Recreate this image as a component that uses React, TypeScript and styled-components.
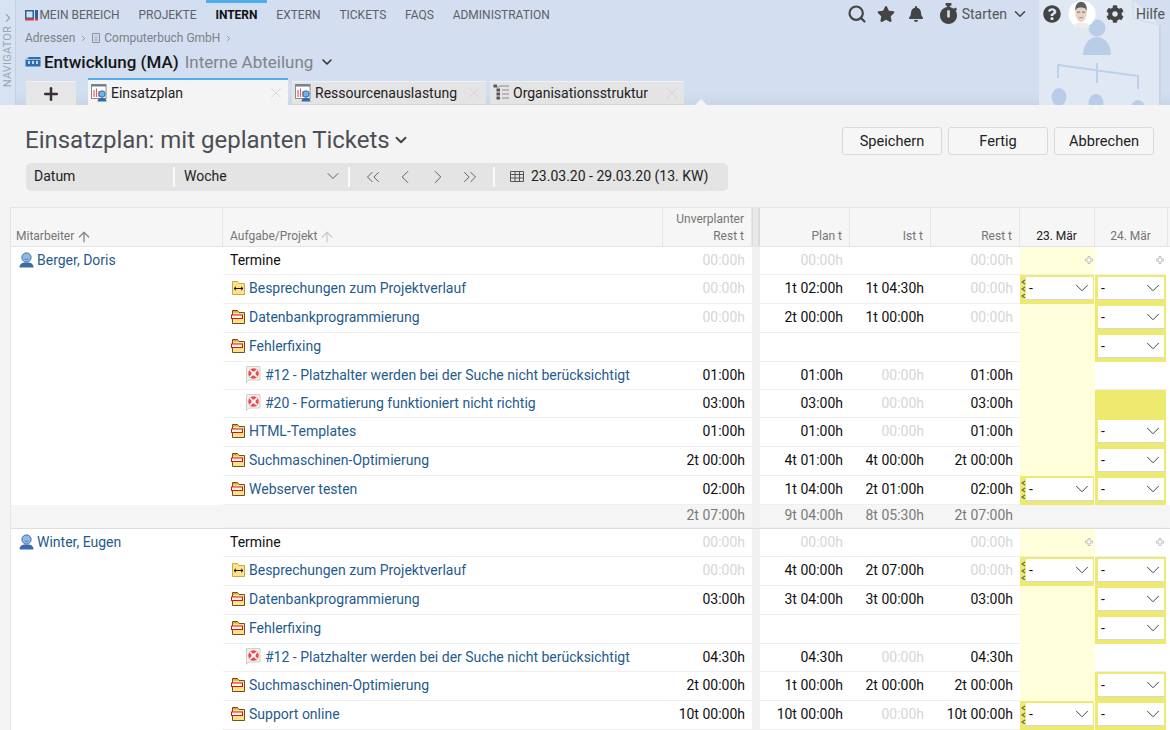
import React from 'react';
import styled, { createGlobalStyle } from 'styled-components';
import { ArrowUp, ChevronDown, ChevronLeft, ChevronRight, ChevronsLeft, ChevronsRight, Plus, Search, X } from 'lucide-react';
import { FaBell, FaCog, FaQuestionCircle, FaStar, FaStopwatch } from 'react-icons/fa';

const GlobalStyle = createGlobalStyle`
  html, body {
    margin: 0;
    height: 730px;
    overflow: hidden;
    background: #f4f4f4;
    font-family: Roboto, "Liberation Sans", sans-serif;
    font-size: 14px;
    color: #111;
  }
  * { box-sizing: border-box; }
`;

const Page = styled.div`
  width: 1170px;
  height: 730px;
  overflow: hidden;
`;

/* ---------- blue header ---------- */

const Header = styled.header`
  position: relative;
  display: flex;
  height: 105px;
  background: linear-gradient(#d3dff0 0, #d3dff0 92px, #c9d6e8 105px);
`;

const Navigator = styled.div`
  position: relative;
  display: flex;
  flex-direction: column;
  align-items: center;
  width: 16px;
  padding-top: 11px;
  background: #d7e2f2;
  border-right: 1px solid #c3d0e3;
  color: #9aa5b5;
`;

const NavigatorLabel = styled.span`
  writing-mode: vertical-rl;
  transform: rotate(180deg);
  font-size: 11px;
  letter-spacing: 0.2px;
  margin-top: 1px;
`;

const HeaderMain = styled.div`
  position: relative;
  flex: 1;
  display: flex;
  flex-direction: column;
  min-width: 0;
`;

const TopBar = styled.div`
  display: flex;
  align-items: flex-start;
  height: 28px;
`;

const MainNav = styled.nav`
  display: flex;
  flex: 1;
`;

const NavItem = styled.a<{ $active?: boolean }>`
  display: flex;
  align-items: center;
  gap: 1px;
  height: 27px;
  padding: 0 9.4px;
  border-top: 3px solid ${(p) => (p.$active ? '#4eaef0' : 'transparent')};
  color: ${(p) => (p.$active ? '#111' : '#5d6069')};
  font-size: 12px;
  font-weight: ${(p) => (p.$active ? 700 : 400)};
  white-space: nowrap;
`;

const Tools = styled.div`
  display: flex;
  align-items: center;
  height: 27px;
  color: #444;
`;

const ToolButton = styled.span<{ $gap?: number }>`
  display: flex;
  align-items: center;
  margin-right: ${(p) => p.$gap ?? 0}px;
`;

const StartLabel = styled.span`
  font-size: 14px;
  color: #555;
  margin: 0 4px 0 3px;
`;

const HelpLabel = styled.span`
  font-size: 14px;
  color: #555;
  margin-right: 5px;
`;

const Crumbs = styled.div`
  display: flex;
  align-items: center;
  gap: 4px;
  height: 20px;
  padding-left: 9px;
  font-size: 12px;
  color: #7c8087;
`;

const TitleRow = styled.div`
  display: flex;
  align-items: center;
  height: 27px;
  padding-left: 9px;
`;

const Entity = styled.span`
  margin-left: 3px;
  font-size: 17px;
  font-weight: 500;
  color: #151515;
`;

const EntityType = styled.span`
  margin: 0 6px;
  font-size: 17px;
  color: #7f838a;
`;

const TabStrip = styled.div`
  display: flex;
  align-items: flex-end;
  height: 27px;
  margin-top: 3px;
  padding-left: 10px;
`;

const AddTab = styled.div`
  display: flex;
  align-items: center;
  justify-content: center;
  width: 50px;
  height: 24px;
  margin-right: 12px;
  background: #e6e6e6;
  border-top: 1px solid #eef1f5;
  color: #333;
`;

const Tab = styled.div<{ $active?: boolean; $width: number }>`
  display: flex;
  align-items: center;
  width: ${(p) => p.$width}px;
  height: ${(p) => (p.$active ? 27 : 24)}px;
  margin-right: 4px;
  padding-left: 3px;
  background: ${(p) => (p.$active ? '#f4f4f4' : '#e4e4e4')};
  border-top: ${(p) => (p.$active ? '2px solid #4eaef0' : '1px solid #eef1f5')};
  border-bottom: ${(p) => (p.$active ? 'none' : '1px solid #d5d5d5')};
  font-size: 14px;
  color: #222;
`;

const TabLabel = styled.span`
  flex: 1;
  margin-left: 3px;
  white-space: nowrap;
`;

const TabClose = styled.span`
  display: flex;
  margin-right: 3px;
  color: #d2d2d2;
`;

const Watermark = styled.svg`
  position: absolute;
  right: 0;
  top: 0;
`;

const Notch = styled.div`
  position: absolute;
  left: 695px;
  bottom: 0;
  border-left: 6px solid transparent;
  border-right: 6px solid transparent;
  border-bottom: 6px solid #f4f4f4;
`;

/* ---------- page head ---------- */

const Content = styled.main`
  padding-top: 22px;
`;

const PageHead = styled.div`
  display: flex;
  justify-content: space-between;
  align-items: flex-start;
  height: 36px;
  padding: 0 16px 0 25px;
`;

const PageTitle = styled.h1`
  display: flex;
  align-items: center;
  gap: 2px;
  margin: 0;
  font-size: 24px;
  font-weight: 400;
  line-height: 26px;
  color: #4c4f55;
`;

const Actions = styled.div`
  display: flex;
  gap: 6px;
`;

const ActionButton = styled.button`
  width: 100px;
  height: 28px;
  padding: 0;
  background: #f6f6f6;
  border: 1px solid #d9d9d9;
  border-radius: 3px;
  font-family: inherit;
  font-size: 14.6px;
  color: #222;
`;

const FilterBar = styled.div`
  display: flex;
  align-items: center;
  width: 702px;
  height: 28px;
  margin-left: 26px;
  background: #e4e4e4;
  border-radius: 5px;
`;

const FilterPart = styled.div<{ $width: number; $inset?: number }>`
  display: flex;
  align-items: center;
  justify-content: space-between;
  width: ${(p) => p.$width}px;
  height: 20px;
  padding: 0 5px 2px ${(p) => p.$inset ?? 8}px;
  border-right: 2px solid #fbfbfb;
  font-size: 14px;
  color: #222;
`;

const Pager = styled.div`
  display: flex;
  align-items: center;
  justify-content: space-between;
  width: 145px;
  height: 20px;
  padding: 0 12px 0 12px;
  border-right: 2px solid #fbfbfb;
  color: #555;
`;

const DateRange = styled.div`
  display: flex;
  align-items: center;
  gap: 7px;
  padding: 0 0 2px 15px;
  font-size: 14px;
  color: #222;
`;

/* ---------- table ---------- */

const COLUMNS = '212px 440px 89px 8px 90px 81px 89px 75px 73px 1fr';

const Table = styled.div`
  margin: 16px 0 0 10px;
  border-top: 1px solid #e6e6e6;
  border-left: 1px solid #e6e6e6;
`;

const HeadRow = styled.div`
  display: grid;
  grid-template-columns: ${COLUMNS};
  height: 39px;
  background: #f6f6f6;
  border-bottom: 1px solid #e4e4e4;
`;

const HeadCell = styled.div<{ $right?: boolean; $center?: boolean; $dark?: boolean; $line?: boolean; $inset?: number }>`
  display: flex;
  flex-direction: column;
  justify-content: flex-end;
  align-items: ${(p) => (p.$right ? 'flex-end' : p.$center ? 'center' : 'flex-start')};
  padding: ${(p) => (p.$right ? '0 7px 1px 0' : p.$center ? '0 1px 1px 0' : `0 0 1px ${p.$inset ?? 5}px`)};
  border-right: ${(p) => (p.$line === false ? 'none' : '1px solid #e6e6e6')};
  font-size: 12px;
  line-height: 17px;
  color: ${(p) => (p.$dark ? '#222' : '#757575')};
`;

const SortLabel = styled.span`
  display: flex;
  align-items: center;
  gap: 2px;
`;

const HeadGap = styled.div`
  background: #e9e9e9;
  border-left: 1px solid #dcdcdc;
  border-right: 2px solid #dcdcdc;
`;

const BodyRow = styled.div<{ $height: number; $sum?: boolean }>`
  display: grid;
  grid-template-columns: ${COLUMNS};
  height: ${(p) => p.$height}px;
  background: ${(p) => (p.$sum ? '#f5f5f5' : '#fff')};
  ${(p) => (p.$sum ? 'border-bottom: 1px solid #dedede;' : '')}
`;

const PersonCell = styled.div`
  display: flex;
  align-items: center;
  gap: 3px;
  padding: 0 0 2px 8px;
  color: #1f5b8e;
  font-size: 14px;
`;

const TaskCell = styled.div<{ $indent?: boolean; $plain?: boolean }>`
  display: flex;
  align-items: center;
  gap: ${(p) => (p.$indent ? 4 : 3)}px;
  padding: 0 0 2px ${(p) => (p.$indent ? 23 : p.$plain ? 7 : 8)}px;
  border-bottom: 1px solid #efefef;
  color: ${(p) => (p.$plain ? '#111' : '#1f5b8e')};
  font-size: 14px;
  white-space: nowrap;
`;

const TimeCell = styled.div<{ $muted?: boolean; $sum?: boolean }>`
  display: flex;
  align-items: center;
  justify-content: flex-end;
  padding: 0 7px 2px 0;
  border-bottom: 1px solid #efefef;
  color: ${(p) => (p.$muted ? '#d6d6d6' : p.$sum ? '#7a7a7a' : '#111')};
  font-size: 14px;
  white-space: nowrap;
`;

const RowGap = styled.div`
  background: #f1f1f1;
`;

type DayKind = 'none' | 'plus' | 'empty' | 'select' | 'handle' | 'full';

const DayCell = styled.div<{ $kind: DayKind; $today?: boolean }>`
  position: relative;
  display: flex;
  align-items: stretch;
  padding: ${(p) => (p.$kind === 'handle' ? '2px 1px 3px 6px' : p.$kind === 'select' ? '2px 2px 3px 3px' : '0')};
  margin-right: ${(p) => (p.$today ? (p.$kind === 'handle' ? 1 : 0) : 2)}px;
  background: ${(p) =>
    p.$kind === 'select' || p.$kind === 'handle' || p.$kind === 'full'
      ? '#eeea70'
      : p.$today && p.$kind !== 'none'
        ? '#ffffdc'
        : 'transparent'};
  border-bottom: 1px solid ${(p) => (p.$kind === 'none' || p.$kind === 'plus' ? '#efefef' : 'transparent')};
`;

const DaySelect = styled.div`
  flex: 1;
  display: flex;
  align-items: center;
  justify-content: space-between;
  padding: 0 0 0 3px;
  background: #fff;
  border-bottom: 1px solid #d8d8d8;
  font-size: 14px;
  color: #111;
`;

const PlusMark = styled.svg`
  position: absolute;
  top: 9px;
  right: 2px;
`;

const HandleMark = styled.svg`
  position: absolute;
  top: 4px;
  left: 1px;
`;

/* ---------- drawn icons ---------- */

const PersonIcon = () => (
  <svg width="15" height="16" viewBox="0 0 15 16">
    <circle cx="7.5" cy="5.5" r="4.6" fill="#8dbbe6" stroke="#3a6ba8" />
    <path d="M5.500 6.800c1 1 3 1 4 0" fill="none" stroke="#3a6ba8" strokeWidth="0.800" />
    <path d="M0.5 15.500c0-3.400 2.600-4.800 4.500-5h5c1.900.2 4.500 1.600 4.500 5z" fill="#3a6ba8" />
  </svg>
);

const FolderBar = () => (
  <svg width="15" height="16" viewBox="0 0 15 16">
    <path d="M1.500 1.500h5l1.500 2h5.500v11h-12z" fill="#ffe08a" stroke="#6b5220" />
    <path d="M2 2h4.300l1 1.500h-5.300z" fill="#f09a2e" />
    <rect x="0.500" y="6" width="11" height="3.500" fill="#fff" stroke="#e01010" />
  </svg>
);

const FolderMeeting = () => (
  <svg width="15" height="16" viewBox="0 0 15 16">
    <path d="M1.500 1.500h5l1.500 2h5.500v11h-12z" fill="#ffe288" stroke="#c9a94a" />
    <path d="M3 8.500h9M3 8.500l2-1.700M3 8.500l2 1.700M12 8.500l-2-1.700M12 8.500l-2 1.700" stroke="#111" fill="none" />
  </svg>
);

const TicketIcon = () => (
  <svg width="15" height="17" viewBox="0 0 15 17">
    <path d="M0.500 0.500h13.500v13.500h-11l-2.500 2.500z" fill="#eef0ec" stroke="#d0d0d0" />
    <circle cx="7.500" cy="7.500" r="5.200" fill="#f04848" />
    <circle cx="7.500" cy="7.500" r="2" fill="#fff" />
    <path d="M4 4l7 7M11 4l-7 7" stroke="#fff" strokeWidth="1.600" />
  </svg>
);

const ChartPersonIcon = () => (
  <svg width="17" height="18" viewBox="0 0 17 18">
    <rect x="0.500" y="0.500" width="14.500" height="14" fill="#fff" stroke="#8a8a8a" />
    <rect x="0.500" y="0.500" width="14.500" height="2" fill="#6d7f92" />
    <path d="M3 13V6M5.500 13V4.500M8 13V7" stroke="#e26060" strokeWidth="1.200" />
    <circle cx="11" cy="10" r="3.200" fill="#6fb2ea" stroke="#2c6cb0" />
    <path d="M6.500 17.500c0-2.400 1.700-3.800 4.500-3.800s4.500 1.400 4.500 3.800z" fill="#2c6cb0" />
  </svg>
);

const OrgIcon = () => (
  <svg width="17" height="18" viewBox="0 0 17 18">
    <rect x="0.500" y="0.500" width="3.500" height="3" fill="#555" />
    <rect x="3.500" y="4.500" width="3.500" height="3" fill="#555" />
    <rect x="3.500" y="8.500" width="3.500" height="3" fill="#555" />
    <rect x="3.500" y="12.500" width="3.500" height="3" fill="#555" />
    <path d="M6 2h10M9 6h7M9 10h7M9 14h7M5 2v2" stroke="#888" />
  </svg>
);

const AreaIcon = () => (
  <svg width="13" height="11" viewBox="0 0 13 11">
    <rect x="0" y="0" width="9" height="10" fill="#2f5f96" />
    <rect x="1.500" y="1.500" width="6" height="6" fill="#cfe0f2" />
    <rect x="10" y="0" width="3" height="10" fill="#2f5f96" />
    <rect x="0" y="8.500" width="9" height="2" fill="#d9402e" />
    <rect x="10" y="8.500" width="3" height="2" fill="#d9402e" />
  </svg>
);

const DepartmentIcon = () => (
  <svg width="16" height="11" viewBox="0 0 16 11">
    <path d="M3 1h12.500v9.500h-15v-7z" fill="#2f6fae" />
    <path d="M3 1v2.500h-2.500zM3 3.500h12.500" stroke="#8fc0ee" fill="#8fc0ee" />
    <rect x="3" y="5" width="2" height="3" fill="#bcd8f3" />
    <rect x="7" y="5" width="2" height="3" fill="#bcd8f3" />
    <rect x="11" y="5" width="2" height="3" fill="#bcd8f3" />
  </svg>
);

const CompanyIcon = () => (
  <svg width="8" height="10" viewBox="0 0 8 10">
    <path d="M.5.500h7v9h-7zM2.500 3h1M4.500 3h1M2.500 5h1M4.500 5h1M2.500 7h3" fill="none" stroke="#8b8f96" />
  </svg>
);

const GridIcon = () => (
  <svg width="14" height="11" viewBox="0 0 14 11">
    <path d="M.5.500h13v10H.5zM.5 3.500h13M.5 7h13M5 .5v10M9.500.5v10" fill="none" stroke="#555" />
  </svg>
);

const Avatar = () => (
  <svg width="28" height="28" viewBox="0 0 30 30">
    <circle cx="15" cy="15" r="14.500" fill="#fff" />
    <path d="M6 30c0-4 3-6 8-6s9 2 9 6z" fill="#ececec" />
    <ellipse cx="14" cy="14" rx="6" ry="9.500" fill="#e6d3c6" />
    <path d="M8 12c-1-7 3-10 6-10s7 3 6 10c-1-3-2-4-6-4s-5 1-6 4z" fill="#5c5f60" />
    <path d="M9.500 13h3.500M15 13h3.500" stroke="#667" />
    <path d="M12 19h4" stroke="#a77" />
  </svg>
);

const HeaderWatermark = () => (
  <Watermark width="170" height="105" viewBox="0 0 170 105">
    <path d="M39 0v105h121V25L133 0z" fill="#e0e8f4" />
    <path d="M160 25v80" stroke="#c4d4ea" strokeWidth="2" />
    <path d="M133 0v18l27 7" fill="none" stroke="#d6e1f0" strokeWidth="2" />
    <circle cx="97" cy="28" r="8.500" fill="#b9cde8" />
    <path d="M83 55c0-10 6-18 14-18s14 8 14 18z" fill="#b9cde8" />
    <path d="M58 78V65l80 11v13M97 63v20" fill="none" stroke="#bdd0ea" strokeWidth="2" />
    <ellipse cx="59" cy="97" rx="7.500" ry="9" fill="#b9cde8" />
    <ellipse cx="96" cy="103" rx="7.500" ry="9" fill="#b9cde8" />
    <ellipse cx="138" cy="109" rx="7.500" ry="9" fill="#b9cde8" />
  </Watermark>
);

/* ---------- data ---------- */

type RowKind = 'termin' | 'meeting' | 'task' | 'ticket' | 'sum';

interface PlanRow {
  kind: RowKind;
  person?: string;
  label?: string;
  times: [string, string, string, string];
  day1: DayKind;
  day2: DayKind;
}

const Z = '00:00h';
const HEIGHTS: Record<RowKind, number> = { termin: 28, meeting: 29, task: 29, ticket: 28, sum: 24 };

const rows: PlanRow[] = [
  { kind: 'termin', person: 'Berger, Doris', label: 'Termine', times: [Z, Z, '', Z], day1: 'plus', day2: 'plus' },
  { kind: 'meeting', label: 'Besprechungen zum Projektverlauf', times: [Z, '1t 02:00h', '1t 04:30h', Z], day1: 'handle', day2: 'select' },
  { kind: 'task', label: 'Datenbankprogrammierung', times: [Z, '2t 00:00h', '1t 00:00h', Z], day1: 'empty', day2: 'select' },
  { kind: 'task', label: 'Fehlerfixing', times: ['', '', '', ''], day1: 'empty', day2: 'select' },
  { kind: 'ticket', label: '#12 - Platzhalter werden bei der Suche nicht berücksichtigt', times: ['01:00h', '01:00h', Z, '01:00h'], day1: 'empty', day2: 'none' },
  { kind: 'ticket', label: '#20 - Formatierung funktioniert nicht richtig', times: ['03:00h', '03:00h', Z, '03:00h'], day1: 'empty', day2: 'full' },
  { kind: 'task', label: 'HTML-Templates', times: ['01:00h', '01:00h', Z, '01:00h'], day1: 'empty', day2: 'select' },
  { kind: 'task', label: 'Suchmaschinen-Optimierung', times: ['2t 00:00h', '4t 01:00h', '4t 00:00h', '2t 00:00h'], day1: 'empty', day2: 'select' },
  { kind: 'task', label: 'Webserver testen', times: ['02:00h', '1t 04:00h', '2t 01:00h', '02:00h'], day1: 'handle', day2: 'select' },
  { kind: 'sum', times: ['2t 07:00h', '9t 04:00h', '8t 05:30h', '2t 07:00h'], day1: 'none', day2: 'none' },
  { kind: 'termin', person: 'Winter, Eugen', label: 'Termine', times: [Z, Z, '', Z], day1: 'plus', day2: 'plus' },
  { kind: 'meeting', label: 'Besprechungen zum Projektverlauf', times: [Z, '4t 00:00h', '2t 07:00h', Z], day1: 'handle', day2: 'select' },
  { kind: 'task', label: 'Datenbankprogrammierung', times: ['03:00h', '3t 04:00h', '3t 00:00h', '03:00h'], day1: 'empty', day2: 'select' },
  { kind: 'task', label: 'Fehlerfixing', times: ['', '', '', ''], day1: 'empty', day2: 'select' },
  { kind: 'ticket', label: '#12 - Platzhalter werden bei der Suche nicht berücksichtigt', times: ['04:30h', '04:30h', Z, '04:30h'], day1: 'empty', day2: 'none' },
  { kind: 'task', label: 'Suchmaschinen-Optimierung', times: ['2t 00:00h', '1t 00:00h', '2t 00:00h', '2t 00:00h'], day1: 'empty', day2: 'select' },
  { kind: 'task', label: 'Support online', times: ['10t 00:00h', '10t 00:00h', Z, '10t 00:00h'], day1: 'handle', day2: 'select' },
];

const navItems = ['PROJEKTE', 'INTERN', 'EXTERN', 'TICKETS', 'FAQS', 'ADMINISTRATION'];

const Day = ({ kind, today }: { kind: DayKind; today?: boolean }) => (
  <DayCell $kind={kind} $today={today}>
    {kind === 'plus' && (
      <PlusMark width="8" height="8" viewBox="0 0 8 8">
        <path d="M3 .5h2v2.500h2.500v2H5v2.500H3V5H.5V3H3z" fill="#fff" stroke="#bbb" strokeWidth="0.900" />
      </PlusMark>
    )}
    {kind === 'handle' && (
      <HandleMark width="5" height="19" viewBox="0 0 5 19">
        <path d="M4 1L1 3l3 2M4 8L1 10l3 2M4 15l-3 2 3 2" fill="none" stroke="#666" strokeWidth="1.200" />
      </HandleMark>
    )}
    {(kind === 'select' || kind === 'handle') && (
      <DaySelect>
        -
        <ChevronDown size={22} strokeWidth={1} color="#333" />
      </DaySelect>
    )}
  </DayCell>
);

const taskIcon = (kind: RowKind) => {
  if (kind === 'meeting') return <FolderMeeting />;
  if (kind === 'task') return <FolderBar />;
  if (kind === 'ticket') return <TicketIcon />;
  return null;
};

const closeIcon = (
  <TabClose>
    <X size={18} strokeWidth={1} />
  </TabClose>
);

const App = () => (
  <Page>
    <GlobalStyle />
    <Header>
      <HeaderWatermark />
      <Navigator>
        <ChevronRight size={14} />
        <NavigatorLabel>NAVIGATOR</NavigatorLabel>
      </Navigator>
      <HeaderMain>
        <TopBar>
          <MainNav>
            <NavItem>
              <AreaIcon />
              MEIN BEREICH
            </NavItem>
            {navItems.map((item) => (
              <NavItem key={item} $active={item === 'INTERN'}>
                {item}
              </NavItem>
            ))}
          </MainNav>
          <Tools>
            <ToolButton $gap={10}>
              <Search size={20} strokeWidth={2.6} />
            </ToolButton>
            <ToolButton $gap={13}>
              <FaStar size={18} />
            </ToolButton>
            <ToolButton $gap={14}>
              <FaBell size={16} />
            </ToolButton>
            <ToolButton $gap={14}>
              <FaStopwatch size={21} />
              <StartLabel>Starten</StartLabel>
              <ChevronDown size={18} strokeWidth={2} />
            </ToolButton>
            <ToolButton $gap={7}>
              <FaQuestionCircle size={18} />
            </ToolButton>
            <ToolButton $gap={10}>
              <Avatar />
            </ToolButton>
            <ToolButton $gap={12}>
              <FaCog size={18} />
            </ToolButton>
            <HelpLabel>Hilfe</HelpLabel>
          </Tools>
        </TopBar>
        <Crumbs>
          Adressen
          <ChevronRight size={9} />
          <CompanyIcon />
          Computerbuch GmbH
          <ChevronRight size={9} />
        </Crumbs>
        <TitleRow>
          <DepartmentIcon />
          <Entity>Entwicklung (MA)</Entity>
          <EntityType>Interne Abteilung</EntityType>
          <ChevronDown size={16} strokeWidth={2.4} color="#333" />
        </TitleRow>
        <TabStrip>
          <AddTab>
            <Plus size={20} strokeWidth={3} />
          </AddTab>
          <Tab $active $width={200}>
            <ChartPersonIcon />
            <TabLabel>Einsatzplan</TabLabel>
            {closeIcon}
          </Tab>
          <Tab $width={194}>
            <ChartPersonIcon />
            <TabLabel>Ressourcenauslastung</TabLabel>
            {closeIcon}
          </Tab>
          <Tab $width={194}>
            <OrgIcon />
            <TabLabel>Organisationsstruktur</TabLabel>
            {closeIcon}
          </Tab>
        </TabStrip>
      </HeaderMain>
      <Notch />
    </Header>
    <Content>
      <PageHead>
        <PageTitle>
          Einsatzplan: mit geplanten Tickets
          <ChevronDown size={18} strokeWidth={2.6} color="#444" />
        </PageTitle>
        <Actions>
          <ActionButton>Speichern</ActionButton>
          <ActionButton>Fertig</ActionButton>
          <ActionButton>Abbrechen</ActionButton>
        </Actions>
      </PageHead>
      <FilterBar>
        <FilterPart $width={149}>Datum</FilterPart>
        <FilterPart $width={175} $inset={9}>
          Woche
          <ChevronDown size={20} strokeWidth={1} color="#444" />
        </FilterPart>
        <Pager>
          <ChevronsLeft size={22} strokeWidth={1} />
          <ChevronLeft size={22} strokeWidth={1} />
          <ChevronRight size={22} strokeWidth={1} />
          <ChevronsRight size={22} strokeWidth={1} />
        </Pager>
        <DateRange>
          <GridIcon />
          23.03.20 - 29.03.20 (13. KW)
        </DateRange>
      </FilterBar>
      <Table>
        <HeadRow>
          <HeadCell>
            <SortLabel>
              Mitarbeiter
              <ArrowUp size={16} color="#888" />
            </SortLabel>
          </HeadCell>
          <HeadCell $inset={7}>
            <SortLabel>
              Aufgabe/Projekt
              <ArrowUp size={16} color="#ccc" />
            </SortLabel>
          </HeadCell>
          <HeadCell $right>
            <span>Unverplanter</span>
            <span>Rest t</span>
          </HeadCell>
          <HeadGap />
          <HeadCell $right>Plan t</HeadCell>
          <HeadCell $right>Ist t</HeadCell>
          <HeadCell $right>Rest t</HeadCell>
          <HeadCell $center $dark>
            23. Mär
          </HeadCell>
          <HeadCell $center>24. Mär</HeadCell>
          <HeadCell $line={false} />
        </HeadRow>
        {rows.map((row, i) => (
          <BodyRow key={i} $height={HEIGHTS[row.kind]} $sum={row.kind === 'sum'}>
            <PersonCell>
              {row.person && <PersonIcon />}
              {row.person}
            </PersonCell>
            <TaskCell $indent={row.kind === 'ticket'} $plain={row.kind === 'termin'}>
              {taskIcon(row.kind)}
              {row.label}
            </TaskCell>
            {row.times.slice(0, 1).map((t, n) => (
              <TimeCell key={n} $muted={t === Z} $sum={row.kind === 'sum'}>
                {t}
              </TimeCell>
            ))}
            <RowGap />
            {row.times.slice(1).map((t, n) => (
              <TimeCell key={n} $muted={t === Z} $sum={row.kind === 'sum'}>
                {t}
              </TimeCell>
            ))}
            <Day kind={row.day1} today />
            <Day kind={row.day2} />
            <Day kind={row.day2 === 'select' || row.day2 === 'full' ? 'full' : 'none'} />
          </BodyRow>
        ))}
      </Table>
    </Content>
  </Page>
);

export default App;
